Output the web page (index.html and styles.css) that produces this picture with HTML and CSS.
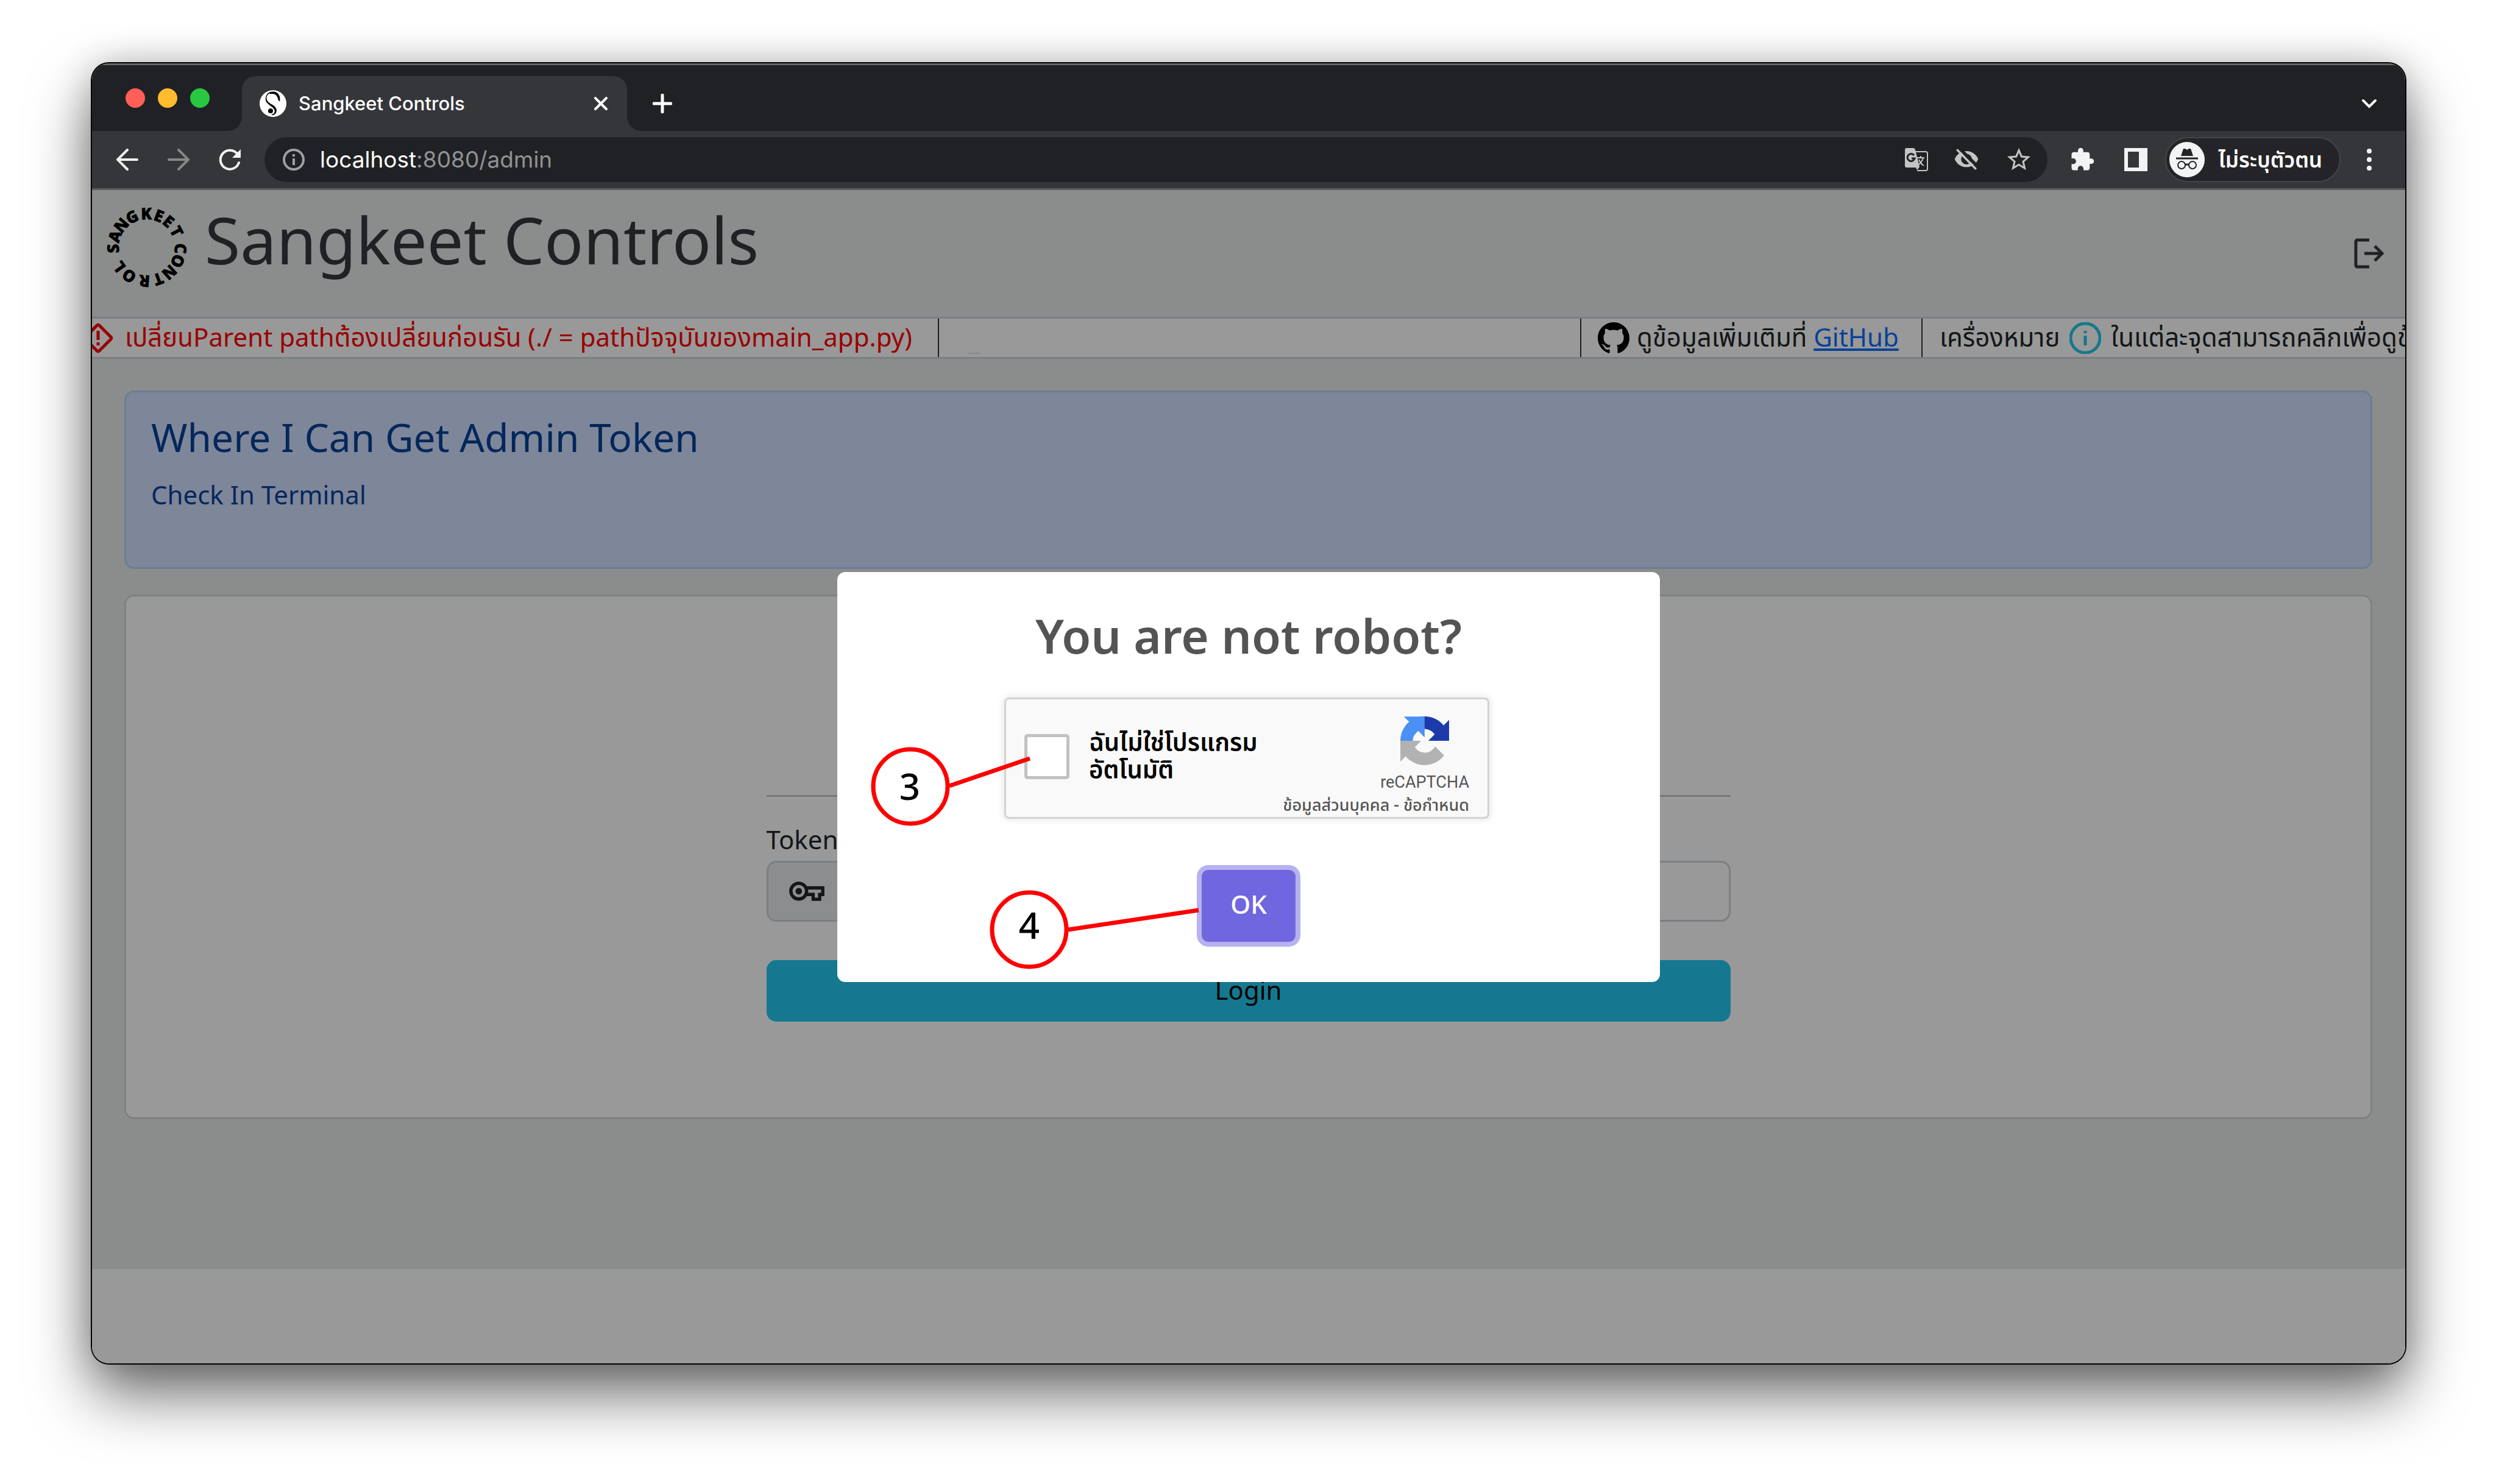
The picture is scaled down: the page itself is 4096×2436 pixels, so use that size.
FILE: index.html
```html
<!DOCTYPE html>
<html lang="th">
<head>
<meta charset="utf-8">
<title>Sangkeet Controls</title>
<link rel="stylesheet" href="styles.css">
</head>
<body>
<div class="window">
  <div class="tabstrip">
    <div class="lights"><span class="light red"></span><span class="light yellow"></span><span class="light green"></span></div>
    <div class="tab">
      <svg class="favicon" viewBox="0 0 44 44"><circle cx="22" cy="22" r="22" fill="#fff"/><path d="M32 17C32 8 27 3 21 3C14 3 10 8 11 14C12 20 17 22 22 25C27 28 29 33 26 38C25 40 22 41 20 40C24 40 27 36 24 31C22 27 16 25 12 20C8 14 11 5 20 4C27 4 32 9 33 18Z" fill="#000" stroke="#000" stroke-width="1"/><path d="M19 5C27 4 30 9 32 17C34 9 28 2 20 4Z" fill="#000" stroke="#000" stroke-width="2"/><circle cx="18" cy="34" r="4" fill="#000"/></svg>
      <span class="tab-title">Sangkeet Controls</span>
      <button class="icon-btn" aria-label="Close tab"><svg class="i22" viewBox="0 0 22 22"><path d="M2 2L20 20M20 2L2 20" stroke="#fff" stroke-width="4" stroke-linecap="round"/></svg></button>
    </div>
    <button class="icon-btn new-tab" aria-label="New tab"><svg class="i32" viewBox="0 0 32 32"><path d="M16 2V30M2 16H30" stroke="#fff" stroke-width="5" stroke-linecap="round"/></svg></button>
    <button class="icon-btn tab-search" aria-label="Search tabs"><svg class="i24" viewBox="0 0 24 24"><path d="M2 6L12 16L22 6" fill="none" stroke="#fff" stroke-width="4" stroke-linecap="round"/></svg></button>
  </div>

  <div class="toolbar">
    <button class="icon-btn" aria-label="Back"><svg class="i36" viewBox="0 0 36 36"><path d="M34 18H4M18 2L2 18L18 34" fill="none" stroke="#f1f3f4" stroke-width="4" stroke-linecap="round"/></svg></button>
    <button class="icon-btn" aria-label="Forward"><svg class="i36" viewBox="0 0 36 36"><path d="M2 18H32M18 2L34 18L18 34" fill="none" stroke="#87888a" stroke-width="4" stroke-linecap="round"/></svg></button>
    <button class="icon-btn" aria-label="Reload"><svg class="i36" viewBox="0 0 36 36"><path d="M33 23A15.500 15.500 0 1 1 29 7" fill="none" stroke="#f1f3f4" stroke-width="4" stroke-linecap="round"/><path d="M36 1V15H22Z" fill="#f1f3f4"/></svg></button>
    <div class="omnibox">
      <svg class="i36" viewBox="0 0 36 36"><circle cx="18" cy="18" r="16" fill="none" stroke="#9aa0a6" stroke-width="4"/><path d="M18 16V27M18 9V13" stroke="#9aa0a6" stroke-width="4"/></svg>
      <span class="url"><b>localhost</b>:8080/admin</span>
      <button class="icon-btn" aria-label="Translate"><svg class="i38" viewBox="0 0 38 38"><path d="M13 6H34Q37 6 37 9V34Q37 37 34 37H20" fill="none" stroke="#c4c4c4" stroke-width="2"/><path d="M3 0H14Q16 0 17 3L24 31L20 36L18 32H3Q0 32 0 29V3Q0 0 3 0Z" fill="#c4c4c4"/><path d="M15 12A6 6 0 1 0 16 17H11" fill="none" stroke="#202124" stroke-width="3"/><path d="M20 16H32M26 13V16M30 16Q28 24 21 28M23 19Q26 26 31 29" fill="none" stroke="#c4c4c4" stroke-width="2"/></svg></button>
      <button class="icon-btn" aria-label="Tracking blocked"><svg class="i42" viewBox="0 0 24 24"><path fill="#c4c4c4" fill-rule="evenodd" d="M12 4C7 4 2.730 7.110 1 11.500c1.730 4.390 6 7.500 11 7.500s9.270-3.110 11-7.500C21.270 7.110 17 4 12 4zM12 16.500a5 5 0 1 1 0-10 5 5 0 0 1 0 10z"/><path d="M13 9a3 3 0 0 1 2 4z" fill="#c4c4c4"/><path d="M5 1L23 19" stroke="#202124" stroke-width="3"/><path d="M3 2.500L21 21" stroke="#c4c4c4" stroke-width="2"/></svg></button>
      <button class="icon-btn" aria-label="Bookmark"><svg class="i46" viewBox="0 0 24 24"><path fill="#c4c4c4" d="M22 9.240l-7.190-.62L12 2 9.190 8.630 2 9.240l5.460 4.730L5.820 21 12 17.270 18.180 21l-1.630-7.030L22 9.240zM12 15.400l-3.760 2.270 1-4.280-3.320-2.880 4.380-.38L12 6.100l1.710 4.040 4.380.38-3.320 2.880 1 4.280L12 15.400z"/></svg></button>
    </div>
    <button class="icon-btn" aria-label="Extensions"><svg class="i42" viewBox="0 0 24 24"><path fill="#f1f3f4" d="M20.500 11H19V7c0-1.100-.9-2-2-2h-4V3.500C13 2.120 11.880 1 10.500 1S8 2.120 8 3.500V5H4c-1.100 0-1.990.9-1.990 2v3.800H3.500c1.490 0 2.700 1.210 2.700 2.700s-1.210 2.700-2.700 2.700H2V20c0 1.100.9 2 2 2h3.800v-1.500c0-1.490 1.210-2.700 2.700-2.700 1.490 0 2.700 1.210 2.700 2.700V22H17c1.100 0 2-.9 2-2v-4h1.500c1.380 0 2.500-1.120 2.500-2.500S21.880 11 20.500 11z"/></svg></button>
    <button class="icon-btn" aria-label="Side panel"><svg class="i38" viewBox="0 0 38 38"><path fill="#f1f3f4" fill-rule="evenodd" d="M0 0H38V38H0ZM6 6V32H24V6Z"/></svg></button>
    <button class="incognito">
      <svg class="i58" viewBox="0 0 58 58"><circle cx="29" cy="29" r="29" fill="#f1f3f4"/><path d="M19 23L23 11H26L29 13L32 11H35L39 23Z" fill="#242428"/><path d="M11 27H47M26 37H32" stroke="#242428" stroke-width="3"/><circle cx="20" cy="38" r="6" fill="none" stroke="#242428" stroke-width="2"/><circle cx="38" cy="38" r="6" fill="none" stroke="#242428" stroke-width="2"/></svg>
      <span>ไม่ระบุตัวตน</span>
    </button>
    <button class="icon-btn kebab" aria-label="Menu"><svg class="i36" viewBox="0 0 36 36"><circle cx="18" cy="4" r="4" fill="#f1f3f4"/><circle cx="18" cy="18" r="4" fill="#f1f3f4"/><circle cx="18" cy="32" r="4" fill="#f1f3f4"/></svg></button>
  </div>

  <div class="page">
    <div class="app">
      <header class="app-header">
        <svg class="logo" viewBox="-68 -68 136 136">
          <g transform="rotate(-92)"><text y="-46">S</text></g><g transform="rotate(-71)"><text y="-46">A</text></g><g transform="rotate(-49)"><text y="-46">N</text></g><g transform="rotate(-26)"><text y="-46">G</text></g><g transform="rotate(-1)"><text y="-46">K</text></g><g transform="rotate(21)"><text y="-46">E</text></g><g transform="rotate(40)"><text y="-46">E</text></g><g transform="rotate(62)"><text y="-46">T</text></g>
          <g transform="rotate(92)"><text y="-46">C</text></g><g transform="rotate(114)"><text y="-46">O</text></g><g transform="rotate(138)"><text y="-46">N</text></g><g transform="rotate(160)"><text y="-46">T</text></g><g transform="rotate(184)"><text y="-46">R</text></g><g transform="rotate(212)"><text y="-46">O</text></g><g transform="rotate(235)"><text y="-46">L</text></g>
        </svg>
        <h1>Sangkeet Controls</h1>
        <a class="logout" href="#" aria-label="Logout"><svg viewBox="0 0 50 50"><path d="M25 3H6Q3 3 3 6V44Q3 47 6 47H25" fill="none" stroke="#343a3e" stroke-width="5"/><path d="M17 25H46M34 13L46 25L34 37" fill="none" stroke="#343a3e" stroke-width="5"/></svg></a>
      </header>

      <div class="ticker">
        <div class="tick warn">
          <svg class="i52" viewBox="0 0 52 52"><rect x="10" y="10" width="32" height="32" rx="2" transform="rotate(45 26 26)" fill="none" stroke="#f00" stroke-width="5"/><path d="M26 14V29M26 33V38" stroke="#f00" stroke-width="5"/></svg>
          <span>เปลี่ยนParent pathต้องเปลี่ยนก่อนรัน (./ = pathปัจจุบันของmain_app.py)</span>
        </div>
        <div class="tick blank"><span class="dash"></span></div>
        <div class="tick github">
          <svg class="i52" viewBox="0 0 16 16"><path d="M8 0C3.580 0 0 3.580 0 8c0 3.540 2.290 6.530 5.470 7.590.4.070.550-.170.550-.380 0-.190-.010-.820-.010-1.490-2.010.370-2.530-.490-2.690-.940-.090-.230-.480-.940-.820-1.130-.280-.150-.680-.520-.010-.530.630-.010 1.080.580 1.230.820.720 1.210 1.870.870 2.330.660.070-.520.280-.870.510-1.070-1.780-.2-3.640-.890-3.640-3.950 0-.870.310-1.590.820-2.150-.080-.2-.360-1.020.080-2.120 0 0 .670-.210 2.200.820.640-.180 1.320-.270 2-.270s1.360.090 2 .270c1.530-1.040 2.200-.820 2.200-.820.440 1.100.160 1.920.080 2.120.510.560.820 1.270.820 2.150 0 3.070-1.870 3.750-3.650 3.950.290.250.540.730.540 1.480 0 1.070-.010 1.930-.010 2.200 0 .210.150.460.550.380A8.010 8.010 0 0 0 16 8c0-4.420-3.580-8-8-8"/></svg>
          <span>ดูข้อมูลเพิ่มเติมที่ <a href="#">GitHub</a></span>
        </div>
        <div class="tick help">
          <span>เครื่องหมาย</span>
          <svg class="i52" viewBox="0 0 52 52"><circle cx="26" cy="26" r="24" fill="none" stroke="#25c8e8" stroke-width="5"/><path d="M26 22V38M26 14V18" stroke="#25c8e8" stroke-width="5"/></svg>
          <span>ในแต่ละจุดสามารถคลิกเพื่อดูข้อมูล</span>
        </div>
      </div>

      <main>
        <section class="alert">
          <h4>Where I Can Get Admin Token</h4>
          <p>Check In Terminal</p>
        </section>
        <section class="card">
          <form class="login">
            <hr>
            <label for="token">Token</label>
            <div class="group">
              <span class="addon"><svg viewBox="236 533 184 101"><g fill="none" stroke="#212529" stroke-width="17"><circle cx="286" cy="583" r="41"/><path d="M322 566H411V600H395V625H361V600H322"/></g><circle cx="286" cy="583" r="17" fill="#212529"/></svg></span>
              <input id="token" type="password">
            </div>
            <button type="button" class="login-btn">Login</button>
          </form>
        </section>
      </main>
    </div>

    <div class="backdrop">
      <div class="modal" role="dialog" aria-labelledby="ask">
        <h2 id="ask">You are not robot?</h2>
        <div class="captcha">
          <input id="human" type="checkbox">
          <label for="human">ฉันไม่ใช่โปรแกรม<br>อัตโนมัติ</label>
          <div class="captcha-side">
            <div class="brand">
              <svg viewBox="0 0 64 64"><path fill="#1c3aa9" d="M64 31.955l-.033-1.370V4.687l-7.160 7.160C50.948 4.674 42.033.093 32.050.093c-10.400 0-19.622 4.960-25.458 12.640l11.736 11.860a15.550 15.550 0 0 1 4.754-5.334c2.050-1.600 4.952-2.906 8.968-2.906.485 0 .860.057 1.135.163 4.976.393 9.288 3.140 11.828 7.124l-8.307 8.307L64 31.953"/><path fill="#4a90f5" d="M31.862.094l-1.370.033H4.594l7.160 7.160C4.580 13.147 0 22.060 0 32.046c0 10.400 4.960 19.622 12.640 25.458L24.500 45.768a15.550 15.550 0 0 1-5.334-4.754c-1.600-2.050-2.906-4.952-2.906-8.968 0-.485.057-.860.163-1.135.393-4.976 3.140-9.288 7.124-11.828l8.307 8.307L31.860.095"/><path fill="#b2b2b2" d="M.001 32.045l.033 1.370v25.898l7.160-7.160c5.860 7.173 14.774 11.754 24.760 11.754 10.400 0 19.622-4.960 25.458-12.640l-11.736-11.860a15.550 15.550 0 0 1-4.754 5.334c-2.050 1.600-4.952 2.906-8.968 2.906-.485 0-.860-.057-1.135-.163-4.976-.393-9.288-3.140-11.828-7.124l8.307-8.307c-10.522.040-22.400.066-27.295-.005"/></svg>
              <span>reCAPTCHA</span>
            </div>
            <div class="terms"><a href="#">ข้อมูลส่วนบุคคล</a> - <a href="#">ข้อกำหนด</a></div>
          </div>
        </div>
        <button class="ok">OK</button>
        <svg class="notes" viewBox="0 0 1350 673">
          <g fill="none" stroke="#f00" stroke-width="7"><circle cx="120" cy="352" r="61"/><circle cx="315" cy="587" r="61"/><path d="M184 351L316 306M379 587L593 555" /></g>
          <text x="119" y="374">3</text><text x="315" y="602">4</text>
        </svg>
      </div>
    </div>
  </div>
</div>
</body>
</html>
```
FILE: styles.css
```css
* { box-sizing: border-box; }
html, body { margin: 0; }
body {
  min-height: 100vh;
  display: flex;
  padding: 104px 149px 198px 151px;
  background: #fff;
  color: #212529;
  font: 42px/63px "Noto Sans", "Noto Sans Thai", sans-serif;
  overflow-x: hidden;
}
svg { display: block; flex: none; }
button { font: inherit; border: 0; margin: 0; padding: 0; cursor: pointer; }
.icon-btn { background: none; display: grid; place-items: center; flex: none; }

.i22 { width: 22px; height: 22px; }
.i24 { width: 24px; height: 24px; }
.i32 { width: 32px; height: 32px; }
.i36 { width: 36px; height: 36px; }
.i38 { width: 38px; height: 38px; }
.i42 { width: 42px; height: 42px; }
.i46 { width: 46px; height: 46px; }
.i52 { width: 52px; height: 52px; }
.i58 { width: 58px; height: 58px; }

/* Browser window */
.window {
  flex: 1;
  min-width: 0;
  display: flex;
  flex-direction: column;
  border-radius: 28px;
  overflow: hidden;
  background: #fff;
  box-shadow: 0 0 0 2px #000, 0 50px 100px rgba(0, 0, 0, .58), 0 0 60px rgba(0, 0, 0, .2);
}
.tabstrip {
  display: flex;
  align-items: flex-end;
  height: 111px;
  background: #202124;
  border-top: 3px solid #66676a;
}
.lights { display: flex; gap: 21px; padding: 0 53px 38px 55px; }
.light { width: 32px; height: 32px; border-radius: 50%; }
.red { background: #ff5f57; }
.yellow { background: #febc2e; }
.green { background: #28c840; }
.tab {
  position: relative;
  display: flex;
  align-items: center;
  gap: 20px;
  width: 632px;
  height: 90px;
  padding: 0 32px 0 29px;
  border-radius: 22px 22px 0 0;
  background: #35363a;
  color: #fff;
}
.tab::before, .tab::after {
  content: "";
  position: absolute;
  bottom: 0;
  width: 22px;
  height: 22px;
}
.tab::before { left: -22px; background: radial-gradient(circle at 0 0, #202124 21px, #35363a 22px); }
.tab::after { right: -22px; background: radial-gradient(circle at 100% 0, #202124 21px, #35363a 22px); }
.favicon { width: 44px; height: 44px; }
.tab-title { flex: 1; font: 500 31px/40px Inter, sans-serif; }
.new-tab { margin: 0 0 29px 42px; }
.tab-search { margin: 0 47px 32px auto; }

.toolbar {
  display: flex;
  align-items: center;
  gap: 48px;
  height: 97px;
  padding: 0 41px 0 40px;
  background: #35363a;
  border-bottom: 3px solid #5b5c60;
}
.omnibox {
  flex: 1;
  display: flex;
  align-items: center;
  gap: 42px;
  height: 74px;
  margin: 0 -12px 0 -9px;
  padding: 0 24px 0 30px;
  border-radius: 37px;
  background: #202124;
}
.url { flex: 1; margin-left: -17px; font: 37px/48px Inter, sans-serif; color: #919294; }
.url b { font-weight: 400; color: #fff; }
.incognito {
  display: flex;
  align-items: center;
  gap: 22px;
  height: 74px;
  margin: 0 -19px;
  padding: 0 28px 0 5px;
  border: 2px solid #434348;
  border-radius: 37px;
  background: #242428;
  color: #fff;
  font: 600 35px/48px "Noto Sans", "Noto Sans Thai", sans-serif;
}

/* Page */
.page { position: relative; flex: 1; background: #fff; }
.app { padding-bottom: 246px; background: #e8ebe9; }
.app-header {
  display: flex;
  align-items: flex-start;
  height: 208px;
  padding: 26px 34px 0 22px;
}
.logo { width: 136px; height: 136px; overflow: visible; }
.logo text { font: 800 26px "Noto Sans", sans-serif; text-anchor: middle; stroke: #000; stroke-width: 1px; }
h1 { flex: 1; margin: -8px 0 0 27px; font-size: 106px; line-height: 127px; font-weight: 400; color: #343a3e; }
.logout { margin-top: 53px; }
.logout svg { width: 50px; height: 50px; }

.ticker {
  display: flex;
  height: 69px;
  border-top: 3px solid #ced4da;
  border-bottom: 3px solid #ced4da;
  background: #fff;
  overflow: hidden;
  white-space: nowrap;
}
.tick { display: flex; align-items: center; flex: none; gap: 16px; border-right: 2px solid #333; }
.tick span { padding-bottom: 5px; }
.warn { width: 1406px; margin-left: -16px; color: #f00; gap: 18px; }
.blank { width: 1054px; padding: 50px 0 0 48px; }
.tick .dash { width: 20px; height: 2px; padding: 0; background: #e0e0e0; }
.github { width: 560px; padding-left: 27px; gap: 12px; }
.github a { color: #0d6efd; }
.help { padding-left: 28px; border: 0; }

main { padding: 52px 54px 0 53px; }
.alert {
  height: 293px;
  margin-bottom: 42px;
  padding: 36px 41px;
  border: 3px solid #b4d0f8;
  border-radius: 16px;
  background: #d2e0ff;
  color: #084298;
}
.alert h4 { margin: 0 0 24px; font-size: 64px; line-height: 76px; font-weight: 400; }
.alert p { margin: 0; }
.card {
  padding: 326px 0 157px;
  border: 3px solid #d3d6d8;
  border-radius: 16px;
  background: #fff;
}
.login { width: min(100%, 1582px); margin: 0 auto; display: flex; flex-direction: column; }
.login hr { width: 100%; height: 3px; margin: 0 0 38px; border: 0; background: #c8c9ca; }
.group { display: flex; height: 100px; margin: 4px 0 63px; }
.addon {
  display: grid;
  place-items: center;
  width: 130px;
  border: 3px solid #ced4da;
  border-right: 0;
  border-radius: 16px 0 0 16px;
  background: #e9ecef;
}
.addon svg { width: 58px; height: 32px; }
.group input {
  flex: 1;
  min-width: 0;
  border: 3px solid #ced4da;
  border-radius: 0 16px 16px 0;
  background: #fff;
  font: inherit;
}
.login-btn { height: 101px; padding-bottom: 5px; border-radius: 16px; background: #25c8f0; color: #000; }

/* Dialog */
.backdrop {
  position: absolute;
  inset: 0;
  display: grid;
  place-items: center;
  background: rgba(0, 0, 0, .4);
}
.modal {
  position: relative;
  display: flex;
  flex-direction: column;
  align-items: center;
  width: 1350px;
  padding: 50px 0 66px;
  border-radius: 13px;
  background: #fff;
}
.modal h2 { margin: 0 0 48px; font-size: 78px; line-height: 108px; font-weight: 600; color: #545454; }
.captcha {
  display: flex;
  align-items: center;
  width: 796px;
  height: 199px;
  margin: 0 6px 84px 0;
  padding: 0 30px 4px 30px;
  border: 3px solid #d3d3d3;
  border-radius: 8px;
  background: #f9f9f9;
  box-shadow: 0 0 10px 3px rgba(0, 0, 0, .08);
}
.captcha input {
  appearance: none;
  width: 74px;
  height: 74px;
  margin: 0 32px 0 0;
  border: 5px solid #c1c1c1;
  border-radius: 5px;
  background: #fff;
}
.captcha label { flex: 1; white-space: nowrap; font: 600 40px/45px Roboto, "Noto Sans Thai", sans-serif; color: #000; }
.captcha-side { display: flex; flex-direction: column; align-items: flex-end; padding-top: 34px; color: #555; }
.brand { display: flex; flex-direction: column; align-items: center; gap: 10px; }
.brand svg { width: 80px; height: 80px; }
.brand span { font: 27px/36px Roboto, sans-serif; }
.terms { white-space: nowrap; font: 500 27px/40px Roboto, "Noto Sans Thai", sans-serif; }
.terms a { color: inherit; text-decoration: none; }
.ok {
  width: 154px;
  height: 118px;
  padding-bottom: 6px;
  border-radius: 11px;
  background: #7066e0;
  box-shadow: 0 0 0 8px #b7b2ef;
  color: #fff;
  font-weight: 500;
}
.notes { position: absolute; top: 0; left: 0; width: 1350px; height: 673px; pointer-events: none; }
.notes text { font: 500 60px "Noto Sans", sans-serif; text-anchor: middle; fill: #000; }
```
